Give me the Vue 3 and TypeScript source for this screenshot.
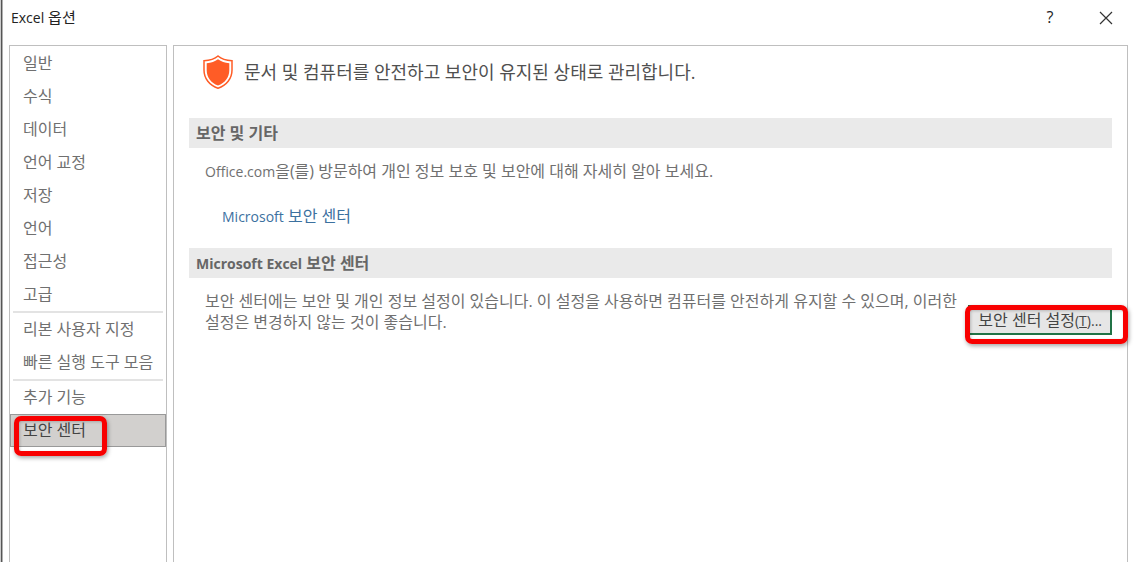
<script setup lang="ts">
const groups: string[][] = [
  ['일반', '수식', '데이터', '언어 교정', '저장', '언어', '접근성', '고급'],
  ['리본 사용자 지정', '빠른 실행 도구 모음'],
  ['추가 기능', '보안 센터'],
]
const selected = '보안 센터'
</script>

<template>
  <div class="dialog">
    <header class="titlebar">
      <h1 class="title"><span class="latin">Excel</span> 옵션</h1>
      <button class="tool" type="button" aria-label="도움말">?</button>
      <button class="tool" type="button" aria-label="닫기">
        <svg width="14" height="14" viewBox="0 0 14 14" aria-hidden="true">
          <path d="M1 1 L13 13 M13 1 L1 13" fill="none" stroke="#333" stroke-width="1.2" />
        </svg>
      </button>
    </header>

    <div class="body">
      <nav class="sidebar">
        <ul v-for="(group, i) in groups" :key="i" class="group">
          <li v-for="item in group" :key="item">
            <button type="button" class="item" :class="{ selected: item === selected }">
              {{ item }}
              <span v-if="item === selected" class="mark mark-item"></span>
            </button>
          </li>
        </ul>
      </nav>

      <main class="content">
        <div class="intro">
          <svg class="shield" width="30" height="34" viewBox="0 0 30 34" aria-hidden="true">
            <path
              d="M15 1 C18.5 4 23 5.4 29 5.8 V15 C29 23.5 23.5 30.6 15 33.2 C6.5 30.6 1 23.5 1 15 V5.8 C7 5.4 11.500 4 15 1 Z"
              fill="#fff" stroke="#ff5c26" stroke-width="1.5"
            />
            <path
              d="M15 4.3 C18.3 6.7 21.7 7.9 26.3 8.2 V15.2 C26.3 22.2 22 28 15 30.5 C8 28 3.7 22.2 3.7 15.2 V8.2 C8.3 7.9 11.7 6.7 15 4.3 Z"
              fill="#ff5c26"
            />
          </svg>
          <p class="lead">문서 및 컴퓨터를 안전하고 보안이 유지된 상태로 관리합니다.</p>
        </div>

        <section>
          <h2 class="bar">보안 및 기타</h2>
          <p class="text"><span class="latin">Office.com</span>을(를) 방문하여 개인 정보 보호 및 보안에 대해 자세히 알아 보세요.</p>
          <a class="link" href="#"><span class="latin">Microsoft</span> 보안 센터</a>
        </section>

        <section>
          <h2 class="bar"><span class="latin">Microsoft Excel</span> 보안 센터</h2>
          <div class="row">
            <p class="text">보안 센터에는 보안 및 개인 정보 설정이 있습니다. 이 설정을 사용하면 컴퓨터를 안전하게 유지할 수 있으며, 이러한 설정은 변경하지 않는 것이 좋습니다.</p>
            <button class="settings" type="button">
              보안 센터 설정<span class="latin">(<u>T</u>)...</span>
              <span class="mark mark-settings"></span>
            </button>
          </div>
        </section>
      </main>
    </div>
  </div>
</template>

<style>
body {
  margin: 0;
  background: #fff;
}
</style>

<style scoped>
.dialog {
  box-sizing: border-box;
  display: flex;
  flex-direction: column;
  height: 100vh;
  overflow: hidden;
  padding: 0 9px 0 9px;
  background: #fff;
  box-shadow: inset 1px 0 #ccc, inset 2px 0 #555, inset 3px 0 #b0b0b0;
  color: #707070;
  font: 16px/21px "Open Sans", "Noto Sans CJK KR", sans-serif;
}
.dialog * {
  box-sizing: border-box;
}
.latin {
  font-size: 14px;
}
h1, h2, p, ul {
  margin: 0;
  padding: 0;
}
button {
  font: inherit;
}
.titlebar {
  display: flex;
  flex: none;
  align-items: center;
  height: 45px;
  padding: 0 0 10px 2px;
}
.title {
  flex: 1;
  color: #222;
  font-size: 15px;
  font-weight: 400;
}
.tool {
  display: flex;
  align-items: center;
  justify-content: center;
  width: 56px;
  height: 32px;
  padding: 0;
  border: 0;
  background: none;
  color: #222;
}
.tool:last-child {
  margin-right: -6px;
}
.body {
  display: flex;
  flex: 1;
  gap: 6px;
  min-height: 0;
}
.sidebar {
  flex: none;
  width: 158px;
  padding-top: 1px;
  border: 1px solid #bfbfbf;
  border-bottom: 0;
}
.group {
  list-style: none;
}
.group + .group::before {
  display: block;
  height: 2px;
  margin: 0 3px;
  background: #e3e3e3;
  content: "";
}
.item {
  position: relative;
  display: block;
  width: 100%;
  height: 33px;
  padding: 0 12px;
  border: 1px solid transparent;
  background: none;
  color: #707070;
  text-align: left;
  white-space: nowrap;
}
.item.selected {
  border-color: #999;
  background: #d2d0ce;
  color: #444;
}
.mark {
  position: absolute;
  border: 5px solid #f80000;
  border-radius: 7px;
  box-shadow: 1px 2px 4px rgba(0, 0, 0, 0.35), inset 1px 1px 3px rgba(0, 0, 0, 0.2);
  pointer-events: none;
}
.mark-item {
  top: 1px;
  left: 3px;
  width: 93px;
  height: 40px;
}
.content {
  flex: 1;
  min-width: 0;
  padding: 8px 15px 0 15px;
  border: 1px solid #bfbfbf;
  border-bottom: 0;
}
.intro {
  display: flex;
  gap: 11px;
  height: 64px;
  padding-left: 14px;
}
.shield {
  flex: none;
  margin-top: 1px;
}
.lead {
  padding-top: 8px;
  color: #505050;
  font-size: 18px;
}
.bar {
  height: 30px;
  padding: 0 7px;
  background: #eaeaea;
  color: #666;
  font-size: 16px;
  font-weight: 700;
  line-height: 30px;
}
.text {
  padding: 13px 0 0 16px;
}
.link {
  display: block;
  width: fit-content;
  margin: 24px 0 21px 33px;
  color: #3c719f;
  text-decoration: none;
}
.row {
  display: flex;
  align-items: flex-start;
}
.row .text {
  flex: 1;
  padding-right: 8px;
  word-break: keep-all;
}
.settings {
  position: relative;
  flex: none;
  height: 30px;
  margin-top: 27px;
  padding: 0 8px;
  border: 2px solid #217346;
  background: #e6e6e6;
  color: #444;
  white-space: nowrap;
}
.mark-settings {
  top: -2px;
  right: -18px;
  left: -5px;
  height: 39px;
}
</style>
